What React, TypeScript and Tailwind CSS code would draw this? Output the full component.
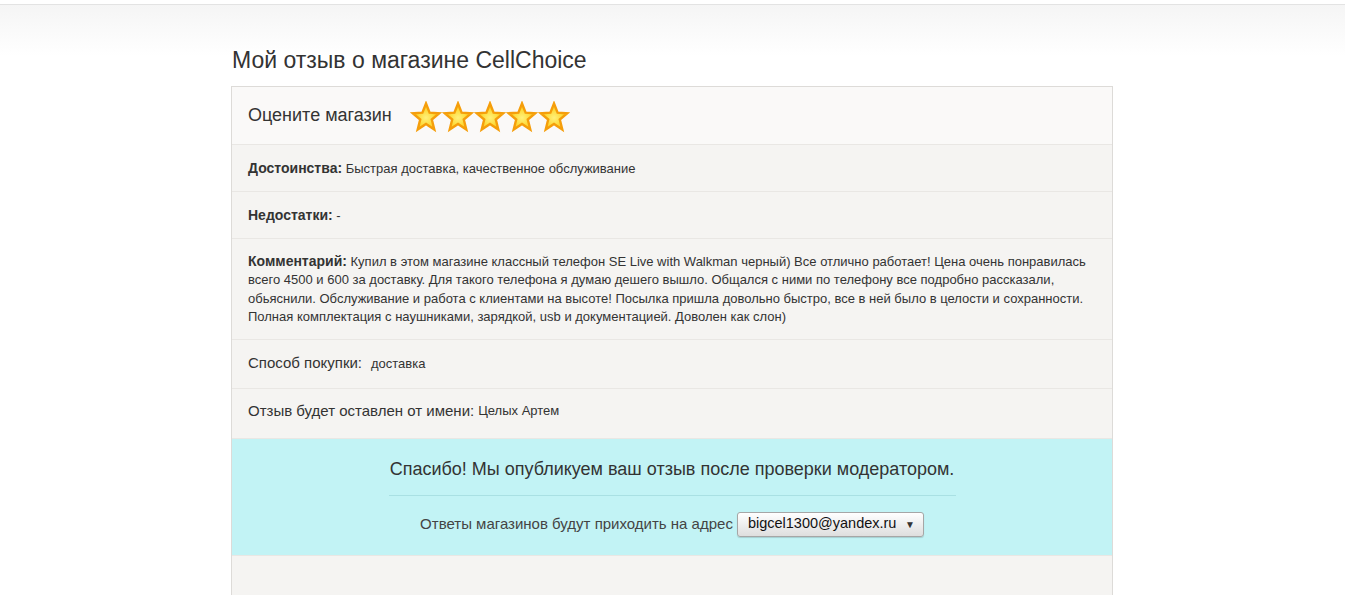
import React from "react";

const Star = () => (
  <svg width="32" height="32" viewBox="0 0 32 32">
    <defs>
      <radialGradient id="starFill" cx="50%" cy="55%" r="55%">
        <stop offset="0%" stopColor="#fff07a" />
        <stop offset="60%" stopColor="#fdd835" />
        <stop offset="100%" stopColor="#f9b81b" />
      </radialGradient>
    </defs>
    <path
      d="M16 2.5 L19.6 11.6 L29.4 12.2 L21.8 18.5 L24.3 28.5 L16 23 L7.7 28.5 L10.2 18.5 L2.6 12.2 L12.4 11.6 Z"
      fill="url(#starFill)"
      stroke="#f59e0b"
      strokeWidth="2.4"
      strokeLinejoin="miter"
    />
  </svg>
);

const Row = ({ children, className = "" }: { children: React.ReactNode; className?: string }) => (
  <div className={`border-t border-[#e9e7e4] px-4 ${className}`}>{children}</div>
);

export default function App() {
  return (
    <div className="min-h-[595px] bg-white font-['Liberation_Sans',Arial,sans-serif] text-[#333]">
      {/* top band */}
      <div className="h-1 bg-white" />
      <div className="h-[52px] border-t border-[#e3e3e3] bg-gradient-to-b from-[#f5f5f5] to-white" />

      <div className="ml-[231px] w-[882px]">
        <h1 className="-mt-[9px] mb-[12px] pl-[1px] text-[23px] leading-[27px] text-[#333]">
          Мой отзыв о магазине CellChoice
        </h1>

        <div className="border border-b-0 border-[#dddbd8] bg-[#f5f4f2]">
          {/* rating header */}
          <div className="flex h-[57px] items-center bg-[#faf9f8] px-4">
            <span className="mr-[18px] text-[18px]">Оцените магазин</span>
            <div className="mt-[2px] flex items-center">
              <Star />
              <Star />
              <Star />
              <Star />
              <Star />
            </div>
          </div>

          <Row className="flex h-[47px] items-center text-[13px]">
            <span>
              <b className="text-[14px]">Достоинства:</b> Быстрая доставка, качественное обслуживание
            </span>
          </Row>

          <Row className="flex h-[47px] items-center text-[13px]">
            <span>
              <b className="text-[14px]">Недостатки:</b> -
            </span>
          </Row>

          <Row className="pb-[12px] pt-[13px] text-[13px] leading-[18.4px]">
            <b className="text-[14px] leading-[18px]">Комментарий:</b> Купил в этом магазине классный телефон SE Live
            with Walkman черный) Все отлично работает! Цена очень понравилась всего 4500 и 600 за доставку. Для такого
            телефона я думаю дешего вышло. Общался с ними по телефону все подробно рассказали, обьяснили. Обслуживание
            и работа с клиентами на высоте! Посылка пришла довольно быстро, все в ней было в целости и сохранности.
            Полная комплектация с наушниками, зарядкой, usb и документацией. Доволен как слон)
          </Row>

          <Row className="flex h-[49px] items-center">
            <span className="text-[15px]">Способ покупки:</span>
            <span className="ml-[9px] text-[13px]">доставка</span>
          </Row>

          <Row className="flex h-[50px] items-center pb-[4px]">
            <span className="text-[15px]">Отзыв будет оставлен от имени:</span>
            <span className="ml-[4px] text-[13px]">Целых Артем</span>
          </Row>

          {/* confirmation */}
          <div className="flex h-[117px] flex-col items-center border-t border-[#e9e7e4] bg-[#c2f3f5]">
            <div className="mt-[19px] w-[567px] border-b border-[#a9e0e3] pb-[15px] text-center text-[18px] leading-[22px]">
              Спасибо! Мы опубликуем ваш отзыв после проверки модератором.
            </div>
            <div className="mt-[16px] flex items-center">
              <span className="text-[15px] text-[#444]">Ответы магазинов будут приходить на адрес</span>
              <div className="ml-[4px] flex h-[25px] w-[187px] items-center justify-between rounded-[3px] border border-[#a6a6a6] bg-gradient-to-b from-white to-[#dedede] pl-[10px] pr-[8px] text-[14.5px] text-[#111] shadow-[0_1px_1px_rgba(0,0,0,0.15)]">
                <span>bigcel1300@yandex.ru</span>
                <span className="text-[10px] text-[#333]">▼</span>
              </div>
            </div>
          </div>

          <div className="h-[40px] border-t border-[#e9e7e4] bg-[#f5f4f2]" />
        </div>
      </div>
    </div>
  );
}
